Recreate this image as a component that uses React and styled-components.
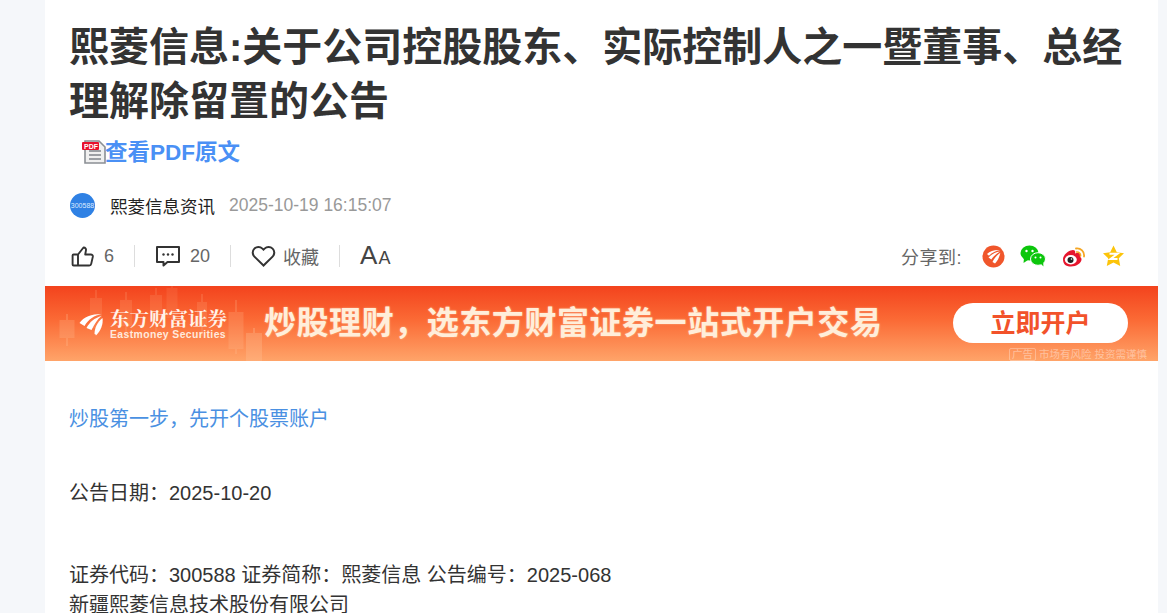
import React from 'react'
import styled, { createGlobalStyle } from 'styled-components'

const FONT = '"Liberation Sans", "Noto Sans CJK SC", sans-serif'

const GlobalStyle = createGlobalStyle`
  html, body {
    margin: 0;
    height: 613px;
    overflow: hidden;
    background: #f5f7fa;
    font-family: ${FONT};
  }
`

const Page = styled.div`
  width: 1113px;
  height: 613px;
  margin-left: 45px;
  background: #fff;
  overflow: hidden;
`

const Head = styled.div`
  padding: 20px 25px 0;
`

const Title = styled.h1`
  margin: 0 0 0 -1px;
  font-size: 40px;
  line-height: 54px;
  font-weight: 700;
  color: #333;
`

const PdfLink = styled.a`
  display: flex;
  align-items: flex-end;
  height: 32px;
  margin: 8px 0 0 12px;
  font-size: 22.5px;
  line-height: 30px;
  font-weight: 700;
  color: #4a90f5;
`

const Source = styled.div`
  display: flex;
  align-items: center;
  height: 26px;
  margin-top: 24px;
`

const Avatar = styled.span`
  width: 25px;
  height: 25px;
  border-radius: 50%;
  background: #2f81e4;
  color: #dcebff;
  font-size: 7px;
  line-height: 25px;
  text-align: center;
  overflow: hidden;
`

const Author = styled.span`
  margin-left: 15px;
  font-size: 17.5px;
  color: #222;
`

const Time = styled.span`
  margin-left: 14px;
  font-size: 17.5px;
  color: #999;
`

const Actions = styled.div`
  display: flex;
  align-items: center;
  justify-content: space-between;
  height: 30px;
  margin-top: 23px;
`

const ActionGroup = styled.div`
  display: flex;
  align-items: center;
`

const Action = styled.span`
  display: flex;
  align-items: center;
  gap: ${p => p.$gap || 10}px;
  font-size: 18px;
  color: #666;
  padding-right: 20px;
  margin-right: 20px;
  border-right: 1px solid #ddd;
  height: 22px;
`

const FontToggle = styled.span`
  display: flex;
  align-items: baseline;
  color: #444;
  font-size: 26px;
  line-height: 26px;
  gap: 1px;

  small {
    font-size: 18px;
  }
`

const Share = styled.div`
  display: flex;
  align-items: center;
`

const ShareLabel = styled.span`
  font-size: 18px;
  letter-spacing: 0.5px;
  color: #666;
  margin-right: 11px;
`

const ShareIcons = styled.div`
  display: grid;
  grid-template-columns: repeat(4, 40px);
  justify-items: center;
  align-items: center;
`

const Banner = styled.div`
  position: relative;
  display: flex;
  align-items: center;
  height: 75px;
  margin-top: 15px;
  background: linear-gradient(180deg, #f3431d 0%, #fb6a35 45%, #ffa469 100%);
  overflow: hidden;
`

const Candles = styled.svg`
  position: absolute;
  left: 0;
  top: 0;
`

const Brand = styled.div`
  position: relative;
  display: flex;
  align-items: center;
  margin-left: 33px;
  gap: 5px;
  color: #fff;
`

const BrandText = styled.div`
  display: flex;
  flex-direction: column;
  font-family: "Noto Serif CJK SC", "Noto Sans CJK SC", serif;
`

const BrandCn = styled.span`
  font-size: 19.5px;
  line-height: 22px;
  font-weight: 700;
  white-space: nowrap;
  color: #fff3ea;
`

const BrandEn = styled.span`
  font-family: ${FONT};
  font-size: 10.4px;
  line-height: 12px;
  font-weight: 700;
  white-space: nowrap;
  color: #ffe9dc;
  letter-spacing: 0.4px;
`

const Slogan = styled.div`
  position: relative;
  margin-left: 37px;
  padding-bottom: 7px;
  font-size: 32px;
  font-weight: 700;
  color: #ffeeda;
  white-space: nowrap;
  letter-spacing: 0.55px;
  text-shadow: 0 0 2px rgba(255, 230, 200, 0.6);
`

const OpenButton = styled.div`
  position: absolute;
  left: 908px;
  top: 17px;
  width: 175px;
  height: 40px;
  border-radius: 20px;
  background: #fff;
  color: #f2522a;
  font-size: 25px;
  font-weight: 700;
  line-height: 40px;
  text-align: center;
`

const Notice = styled.div`
  position: absolute;
  right: 11px;
  bottom: 0;
  display: flex;
  align-items: center;
  gap: 3px;
  font-size: 10.5px;
  line-height: 11px;
  color: rgba(255, 255, 255, 0.4);
  white-space: nowrap;

  i {
    font-style: normal;
    border: 1px solid rgba(255, 255, 255, 0.3);
    border-radius: 2px;
    padding: 0 2px;
  }
`

const Body = styled.div`
  padding: 0 25px;
  font-size: 20px;
  color: #333;
`

const Para = styled.p`
  margin: ${p => p.$top || 0}px 0 0 -1px;
  line-height: 30px;
  color: ${p => (p.$link ? '#4a90e2' : '#333')};
`

const PdfMark = styled.svg`
  margin: 0 -1px 3px 0;
`

const PdfIcon = () => (
  <PdfMark width="24" height="26" viewBox="0 0 24 26">
    <path d="M3 2h14l6 6v16H3z" fill="#f0f0f0" stroke="#8b8f94" strokeWidth="1.6" />
    <path d="M7 12h12M7 16h12M7 20h12" stroke="#80848a" strokeWidth="1.6" />
    <rect x="0" y="3" width="17" height="8" rx="1" fill="#e8112d" />
    <text x="2" y="9.700" fontSize="7" fontWeight="700" fill="#fff" fontFamily={FONT}>PDF</text>
  </PdfMark>
)

const ThumbIcon = () => (
  <svg width="24" height="24" viewBox="0 0 24 24" fill="none" stroke="#333" strokeWidth="1.9" strokeLinejoin="round" strokeLinecap="round">
    <path d="M8 10.500h-4.400a1 1 0 0 0-1 1v9a1 1 0 0 0 1 1h15.600a2 2 0 0 0 2-1.600l1.600-7a2 2 0 0 0-2-2.400h-5.600l.8-4.300a2.300 2.300 0 0 0-2.200-2.700h-.3L8 10.500v11" />
  </svg>
)

const CommentIcon = () => (
  <svg width="26" height="24" viewBox="0 0 26 24" fill="none" stroke="#333" strokeWidth="2" strokeLinejoin="round">
    <path d="M2 3h22v15H12.500l-4 3.500V18H2z" />
    <circle cx="8.500" cy="10.500" r="1.200" fill="#333" stroke="none" />
    <circle cx="13" cy="10.500" r="1.200" fill="#333" stroke="none" />
    <circle cx="17.500" cy="10.500" r="1.200" fill="#333" stroke="none" />
  </svg>
)

const HeartIcon = () => (
  <svg width="25" height="22" viewBox="0 0 25 22" fill="none" stroke="#333" strokeWidth="2">
    <path d="M12.500 20.500 3.400 11.600a5.600 5.600 0 0 1 0-8 5.700 5.700 0 0 1 8 0l1.100 1.100 1.100-1.100a5.700 5.700 0 0 1 8 0 5.600 5.600 0 0 1 0 8z" />
  </svg>
)

const EastmoneyIcon = () => (
  <svg width="23" height="23" viewBox="0 0 23 23">
    <circle cx="11.500" cy="11.500" r="11" fill="#f0562b" />
    <path d="M5 9c3-3 8-4.500 13-4-4 .8-8 2.500-11 5.800z" fill="#fff" />
    <path d="M6.500 12.500c2.500-3 7-5.500 11.500-6-3 2-6.500 4.500-8.700 8z" fill="#fff" />
    <path d="M10.500 17c1.500-3.500 4.500-7 7.800-9.200-.6 3.700-2.700 8-5.300 10.800z" fill="#fff" />
  </svg>
)

const WechatIcon = () => (
  <svg width="26" height="22" viewBox="0 0 26 22">
    <ellipse cx="9.500" cy="8" rx="9" ry="7.500" fill="#0cc60c" />
    <path d="M4 13l-.5 5 4.500-3z" fill="#0cc60c" />
    <ellipse cx="18" cy="14" rx="7.500" ry="6.300" fill="#0cc60c" stroke="#fff" strokeWidth="1" />
    <path d="M21 19l2.500 2.500-.4-4z" fill="#0cc60c" />
    <circle cx="6.500" cy="6" r="1.200" fill="#fff" />
    <circle cx="12.500" cy="6" r="1.200" fill="#fff" />
    <circle cx="15.500" cy="12.500" r="1" fill="#fff" />
    <circle cx="20.500" cy="12.500" r="1" fill="#fff" />
  </svg>
)

const WeiboIcon = () => (
  <svg width="25" height="22" viewBox="0 0 25 22">
    <path d="M2 14c0-4 6-9 10-9 2 0 2.500 1.500 2 3.500 3-1 5.500-.5 5.500 1.500 0 .8-.3 1.300-.5 2 1.500 .5 1.500 2 1.500 2.500 0 3.500-5 7-10.500 7S2 19 2 14z" fill="#e6162d" />
    <ellipse cx="9.800" cy="14.800" rx="6" ry="4.700" fill="#fff" />
    <circle cx="9.500" cy="15" r="3" fill="#222" />
    <circle cx="10.500" cy="14" r=".8" fill="#fff" />
    <path d="M15 3.500a7 7 0 0 1 8 8" fill="none" stroke="#f5a623" strokeWidth="1.800" strokeLinecap="round" />
    <path d="M15.500 7a3.500 3.500 0 0 1 4 4" fill="none" stroke="#f5a623" strokeWidth="1.600" strokeLinecap="round" />
  </svg>
)

const QzoneIcon = () => (
  <svg width="23" height="22" viewBox="0 0 23 22">
    <path d="M11.500 .5l3.300 6.700 7.200 1-5.200 5.100 1.400 7.700-6.700-3.600-6.700 3.600 1.400-7.700L1 8.200l7.200-1z" fill="#fcc40a" />
    <path d="M7.500 8.800h8L8.500 14h7" fill="none" stroke="#fff" strokeWidth="2" />
  </svg>
)

const LogoMark = () => (
  <svg width="27" height="24" viewBox="0 0 26 24">
    <path d="M1 11C5 5 13 2 23 2c-7 1.500-13 5-17 12z" fill="#fff" />
    <path d="M8 16c3-6 8-10 15-12-4 3-7 8-10 14z" fill="#fff" />
    <path d="M16 22c0-6 3-12 8-16 1 6-2 13-6 17z" fill="#fff" />
  </svg>
)

// center x, width, wick top, body top, body height, wick bottom
const candles = [
  [22, 15, 28, 34, 18, 60],
  [51, 12, 4, 12, 30, 50],
  [81, 12, 6, 14, 26, 52],
  [111, 12, 2, 9, 25, 46],
  [127, 11, 0, 2, 30, 44],
  [157, 10, 8, 16, 22, 50],
  [191, 15, 14, 26, 37, 68],
  [209, 16, 42, 47, 28, 75],
]

const BannerCandles = () => (
  <Candles width="240" height="75" viewBox="0 0 240 75">
    {candles.map(([x, w, a, b, h, c]) => (
      <g key={x} fill="#ffc49a" opacity={0.1 + b * 0.004}>
        <rect x={x - 1} y={a} width="2" height={c - a} />
        <rect x={x - w / 2} y={b} width={w} height={h} />
      </g>
    ))}
  </Candles>
)

export default function App() {
  return (
    <Page>
      <GlobalStyle />
      <Head>
        <Title>熙菱信息:关于公司控股股东、实际控制人之一暨董事、总经理解除留置的公告</Title>
        <PdfLink>
          <PdfIcon />
          查看PDF原文
        </PdfLink>
        <Source>
          <Avatar>300588</Avatar>
          <Author>熙菱信息资讯</Author>
          <Time>2025-10-19 16:15:07</Time>
        </Source>
        <Actions>
          <ActionGroup>
            <Action><ThumbIcon />6</Action>
            <Action $gap={9}><CommentIcon />20</Action>
            <Action $gap={7}><HeartIcon />收藏</Action>
            <FontToggle>A<small>A</small></FontToggle>
          </ActionGroup>
          <Share>
            <ShareLabel>分享到:</ShareLabel>
            <ShareIcons>
              <EastmoneyIcon />
              <WechatIcon />
              <WeiboIcon />
              <QzoneIcon />
            </ShareIcons>
          </Share>
        </Actions>
      </Head>
      <Banner>
        <BannerCandles />
        <Brand>
          <LogoMark />
          <BrandText>
            <BrandCn>东方财富证券</BrandCn>
            <BrandEn>Eastmoney Securities</BrandEn>
          </BrandText>
        </Brand>
        <Slogan>{'炒股理财\uFF0C选东方财富证券一站式开户交易'}</Slogan>
        <OpenButton>立即开户</OpenButton>
        <Notice><i>广告</i>市场有风险 投资需谨慎</Notice>
      </Banner>
      <Body>
        <Para $link $top={43}>{'炒股第一步\uFF0C先开个股票账户'}</Para>
        <Para $top={44}>{'公告日期\uFF1A2025-10-20'}</Para>
        <Para $top={52}>{'证券代码\uFF1A300588 证券简称\uFF1A熙菱信息 公告编号\uFF1A2025-068'}</Para>
        <Para>新疆熙菱信息技术股份有限公司</Para>
      </Body>
    </Page>
  )
}
